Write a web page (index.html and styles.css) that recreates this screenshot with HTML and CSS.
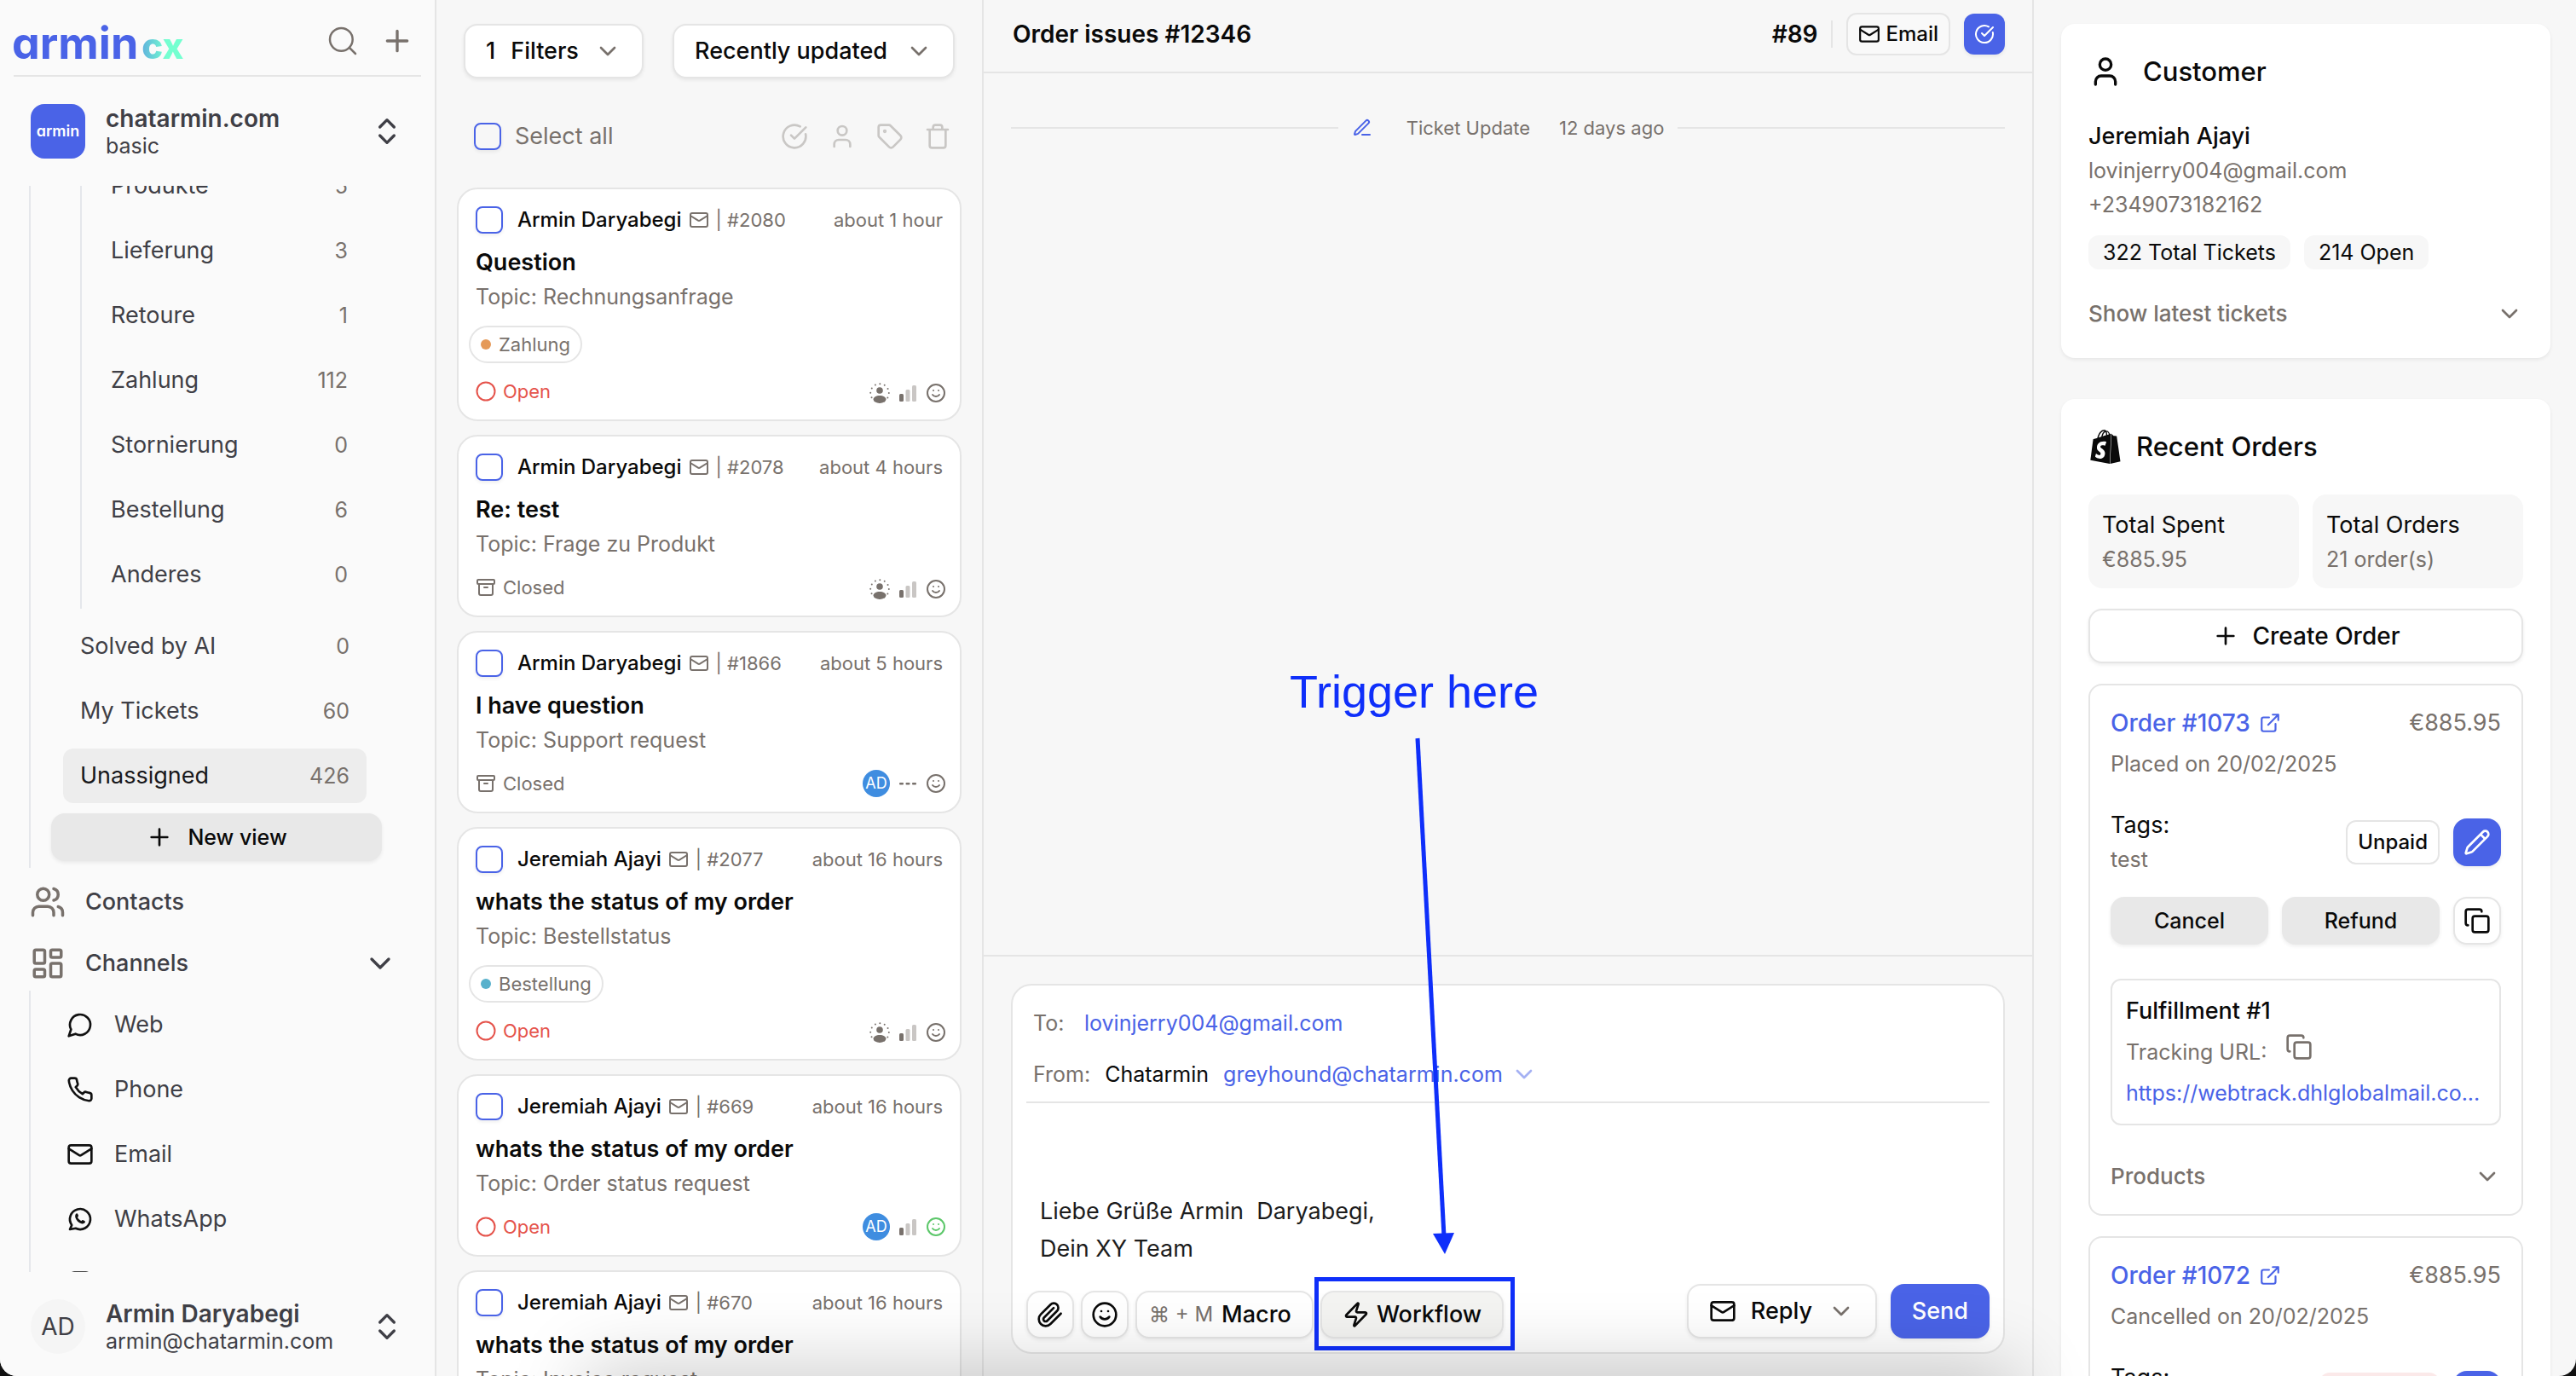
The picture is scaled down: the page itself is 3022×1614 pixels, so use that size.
FILE: index.html
```html
<!DOCTYPE html>
<html lang="en">
<head>
<meta charset="utf-8">
<title>armin cx – Tickets</title>
<link rel="stylesheet" href="styles.css">
</head>
<body>
<svg class="sprite" aria-hidden="true">
  <symbol id="search" viewBox="0 0 24 24"><circle cx="11" cy="11" r="8"/><path d="m21 21-4.3-4.3"/></symbol>
  <symbol id="plus" viewBox="0 0 24 24"><path d="M5 12h14M12 5v14"/></symbol>
  <symbol id="updown" viewBox="0 0 24 24"><path d="m7 15 5 5 5-5M7 9l5-5 5 5"/></symbol>
  <symbol id="chevron" viewBox="0 0 24 24"><path d="m6 9 6 6 6-6"/></symbol>
  <symbol id="users" viewBox="0 0 24 24"><path d="M16 21v-2a4 4 0 0 0-4-4H6a4 4 0 0 0-4 4v2"/><circle cx="9" cy="7" r="4"/><path d="M22 21v-2a4 4 0 0 0-3-3.87M16 3.13a4 4 0 0 1 0 7.75"/></symbol>
  <symbol id="board" viewBox="0 0 24 24"><rect x="3" y="3" width="7" height="9" rx="1"/><rect x="14" y="3" width="7" height="5" rx="1"/><rect x="14" y="12" width="7" height="9" rx="1"/><rect x="3" y="16" width="7" height="5" rx="1"/></symbol>
  <symbol id="chat" viewBox="0 0 24 24"><path d="M7.9 20A9 9 0 1 0 4 16.1L2 22Z"/></symbol>
  <symbol id="phone" viewBox="0 0 24 24"><path d="M22 16.92v3a2 2 0 0 1-2.18 2 19.79 19.79 0 0 1-8.63-3.07 19.5 19.5 0 0 1-6-6 19.79 19.79 0 0 1-3.07-8.67A2 2 0 0 1 4.11 2h3a2 2 0 0 1 2 1.72 12.84 12.84 0 0 0 .7 2.81 2 2 0 0 1-.45 2.11L8.09 9.91a16 16 0 0 0 6 6l1.27-1.27a2 2 0 0 1 2.11-.45 12.84 12.84 0 0 0 2.81.7A2 2 0 0 1 22 16.92z"/></symbol>
  <symbol id="mail" viewBox="0 0 24 24"><rect x="2" y="4" width="20" height="16" rx="2"/><path d="m22 7-8.97 5.7a1.94 1.94 0 0 1-2.06 0L2 7"/></symbol>
  <symbol id="whatsapp" viewBox="0 0 24 24"><path d="m3 21 1.65-3.8a9 9 0 1 1 3.4 2.9z"/><path d="M8.3 7.4c.5-.6 1.4-.5 1.7.2l.5 1.3c.2.5-.4 1-.7 1.4.6 1.500 1.700 2.600 3.300 3.300.4-.4.9-1 1.500-.7l1.300.6c.7.400.7 1.100.200 1.700-.7.900-1.900 1-2.900.7-2.600-.8-4.600-2.800-5.400-5.300-.3-1.100-.2-2.300.5-3.200z" fill="currentColor" stroke="none"/></symbol>
  <symbol id="instagram" viewBox="0 0 24 24"><rect x="2" y="2" width="20" height="20" rx="5"/><circle cx="12" cy="12" r="4"/></symbol>
  <symbol id="check" viewBox="0 0 24 24"><path d="M21.801 10A10 10 0 1 1 17 3.335"/><path d="m9 11 3 3L22 4"/></symbol>
  <symbol id="user" viewBox="0 0 24 24"><path d="M19 21v-2a4 4 0 0 0-4-4H9a4 4 0 0 0-4 4v2"/><circle cx="12" cy="7" r="4"/></symbol>
  <symbol id="tag" viewBox="0 0 24 24"><path d="M12.586 2.586A2 2 0 0 0 11.172 2H4a2 2 0 0 0-2 2v7.172a2 2 0 0 0 .586 1.414l8.704 8.704a2.426 2.426 0 0 0 3.420 0l6.580-6.580a2.426 2.426 0 0 0 0-3.420z"/><circle cx="7.500" cy="7.500" r=".6" fill="currentColor"/></symbol>
  <symbol id="trash" viewBox="0 0 24 24"><path d="M3 6h18M19 6v14a2 2 0 0 1-2 2H7a2 2 0 0 1-2-2V6M8 6V4a2 2 0 0 1 2-2h4a2 2 0 0 1 2 2v2"/></symbol>
  <symbol id="ring" viewBox="0 0 24 24"><circle cx="12" cy="12" r="10.500"/></symbol>
  <symbol id="archive" viewBox="0 0 24 24"><rect x="2" y="3" width="20" height="5" rx="1"/><path d="M4 8v11a2 2 0 0 0 2 2h12a2 2 0 0 0 2-2V8M10 12h4"/></symbol>
  <symbol id="nobody" viewBox="0 0 24 24"><circle cx="12" cy="12" r="10.800" stroke-width="2" stroke-dasharray="0 5.655"/><circle cx="12" cy="9" r="3.800" fill="currentColor" stroke="none"/><path d="M12 15c4 0 7.500 2 7.500 4.300S16 24 12 24s-7.500-2.400-7.500-4.700S8 15 12 15z" fill="currentColor" stroke="none"/></symbol>
  <symbol id="bars" viewBox="0 0 24 24"><g fill="currentColor" stroke="none"><rect x="2" y="13" width="5" height="9" rx="1.500"/><rect x="9.500" y="8" width="5" height="14" rx="1.500" opacity=".4"/><rect x="17" y="3" width="5" height="19" rx="1.500" opacity=".4"/></g></symbol>
  <symbol id="dashes" viewBox="0 0 24 24"><g fill="currentColor" stroke="none"><rect x="2" y="11" width="5" height="2.500" rx="1"/><rect x="9.500" y="11" width="5" height="2.500" rx="1"/><rect x="17" y="11" width="5" height="2.500" rx="1"/></g></symbol>
  <symbol id="smile" viewBox="0 0 24 24"><circle cx="12" cy="12" r="10"/><path d="M8 14s1.500 2 4 2 4-2 4-2M9 9h.01M15 9h.01"/></symbol>
  <symbol id="penline" viewBox="0 0 24 24"><path d="M12 20h9M16.376 3.622a1 1 0 0 1 3.002 3.002L7.368 18.635a2 2 0 0 1-.855.506l-2.872.838a.5.5 0 0 1-.62-.62l.838-2.872a2 2 0 0 1 .506-.854z"/></symbol>
  <symbol id="pencil" viewBox="0 0 24 24"><path d="M21.174 6.812a1 1 0 0 0-3.986-3.987L3.842 16.174a2 2 0 0 0-.5.83l-1.321 4.352a.5.5 0 0 0 .623.622l4.353-1.320a2 2 0 0 0 .83-.497zM15 5l4 4"/></symbol>
  <symbol id="clip" viewBox="0 0 24 24"><path d="m21.440 11.050-9.190 9.190a6 6 0 0 1-8.490-8.490l8.570-8.570A4 4 0 1 1 18 8.840l-8.590 8.570a2 2 0 0 1-2.830-2.830l8.490-8.480"/></symbol>
  <symbol id="zap" viewBox="0 0 24 24"><path d="M4 14a1 1 0 0 1-.78-1.630l9.900-10.200a.5.5 0 0 1 .86.46l-1.920 6.020A1 1 0 0 0 13 10h7a1 1 0 0 1 .78 1.630l-9.900 10.200a.5.5 0 0 1-.86-.46l1.920-6.020A1 1 0 0 0 11 14z"/></symbol>
  <symbol id="external" viewBox="0 0 24 24"><path d="M15 3h6v6M10 14 21 3M18 13v6a2 2 0 0 1-2 2H5a2 2 0 0 1-2-2V8a2 2 0 0 1 2-2h6"/></symbol>
  <symbol id="copy" viewBox="0 0 24 24"><rect x="8" y="8" width="14" height="14" rx="2"/><path d="M4 16c-1.100 0-2-.9-2-2V4c0-1.100.9-2 2-2h10c1.100 0 2 .9 2 2"/></symbol>
  <symbol id="shopify" viewBox="0 0 24 24"><path fill="currentColor" stroke="none" d="M15.337 23.979l7.216-1.561s-2.604-17.613-2.625-17.730c-.018-.116-.114-.192-.211-.192s-1.929-.136-1.929-.136-1.275-1.274-1.439-1.411c-.045-.037-.075-.057-.121-.074l-.914 21.104h.023zM11.710 11.305s-.81-.424-1.774-.424c-1.447 0-1.504.906-1.504 1.141 0 1.232 3.240 1.715 3.240 4.629 0 2.295-1.440 3.760-3.406 3.760-2.354 0-3.540-1.465-3.540-1.465l.646-2.086s1.245 1.066 2.280 1.066c.675 0 .975-.545.975-.932 0-1.619-2.654-1.694-2.654-4.359-.034-2.237 1.571-4.416 4.827-4.416 1.257 0 1.875.361 1.875.361l-.945 2.715-.02.01zM11.170.83c.136 0 .271.038.405.135-.984.465-2.064 1.639-2.508 3.992-.656.213-1.293.405-1.889.578C7.697 3.750 8.951.84 11.170.84V.83zm1.235 2.949v.135c-.754.232-1.583.484-2.394.736.466-1.777 1.333-2.645 2.085-2.971.193.501.309 1.176.309 2.100zm.539-2.234c.694.074 1.141.867 1.429 1.755-.349.114-.735.231-1.158.366v-.252c0-.752-.096-1.371-.271-1.871v.002zm2.992 1.289c-.02 0-.06.021-.078.021s-.289.075-.714.21c-.423-1.233-1.176-2.370-2.508-2.370h-.115C12.135.209 11.669 0 11.265 0 8.159 0 6.675 3.877 6.210 5.846c-1.194.365-2.063.636-2.160.674-.675.213-.694.232-.772.87-.075.462-1.830 14.063-1.830 14.063L15.009 24l.927-21.166z"/></symbol>
</svg>

<div class="app">
  <aside class="sidebar">
    <header class="brand">
      <a class="logo" href="#">armin<span class="logo-cx">cx</span></a>
      <button class="bare" aria-label="Search"><svg class="i40 thin"><use href="#search"/></svg></button>
      <button class="bare" aria-label="Add"><svg class="i40"><use href="#plus"/></svg></button>
    </header>
    <button class="account">
      <span class="account-logo">armin</span>
      <span class="account-text"><strong>chatarmin.com</strong><span>basic</span></span>
      <svg class="i40"><use href="#updown"/></svg>
    </button>

    <nav class="nav">
      <div class="branch views">
        <div class="branch topics">
          <a class="row" href="#">Produkte<span class="count">5</span></a>
          <a class="row" href="#">Lieferung<span class="count">3</span></a>
          <a class="row" href="#">Retoure<span class="count">1</span></a>
          <a class="row" href="#">Zahlung<span class="count">112</span></a>
          <a class="row" href="#">Stornierung<span class="count">0</span></a>
          <a class="row" href="#">Bestellung<span class="count">6</span></a>
          <a class="row" href="#">Anderes<span class="count">0</span></a>
        </div>
        <a class="row" href="#">Solved by AI<span class="count">0</span></a>
        <a class="row" href="#">My Tickets<span class="count">60</span></a>
        <a class="row active" href="#">Unassigned<span class="count">426</span></a>
        <button class="btn soft new-view"><svg class="i32"><use href="#plus"/></svg>New view</button>
      </div>
      <a class="section" href="#"><svg class="i42"><use href="#users"/></svg>Contacts</a>
      <a class="section" href="#"><svg class="i42"><use href="#board"/></svg>Channels<svg class="i40 fold"><use href="#chevron"/></svg></a>
      <div class="branch channels">
        <a class="row" href="#"><svg class="i32"><use href="#chat"/></svg>Web</a>
        <a class="row" href="#"><svg class="i32"><use href="#phone"/></svg>Phone</a>
        <a class="row" href="#"><svg class="i32"><use href="#mail"/></svg>Email</a>
        <a class="row" href="#"><svg class="i32"><use href="#whatsapp"/></svg>WhatsApp</a>
        <a class="row" href="#" aria-label="Instagram"><svg class="i32"><use href="#instagram"/></svg></a>
      </div>
    </nav>

    <button class="account me">
      <span class="avatar">AD</span>
      <span class="account-text"><strong>Armin Daryabegi</strong><span>armin@chatarmin.com</span></span>
      <svg class="i40"><use href="#updown"/></svg>
    </button>
  </aside>

  <section class="list">
    <div class="filters">
      <button class="btn filter"><span>1</span><span>Filters</span><svg class="i32 dim"><use href="#chevron"/></svg></button>
      <div class="btn sort">
        <select aria-label="Sort order"><option>Recently updated</option></select>
        <svg class="i32 dim"><use href="#chevron"/></svg>
      </div>
    </div>
    <div class="bulk">
      <label class="select-all"><input class="tick" type="checkbox">Select all</label>
      <button class="bare" aria-label="Close"><svg class="i32"><use href="#check"/></svg></button>
      <button class="bare" aria-label="Assign"><svg class="i32"><use href="#user"/></svg></button>
      <button class="bare" aria-label="Tag"><svg class="i32"><use href="#tag"/></svg></button>
      <button class="bare" aria-label="Delete"><svg class="i32"><use href="#trash"/></svg></button>
    </div>

    <article class="ticket">
      <div class="ticket-head"><input class="tick" type="checkbox" aria-label="Select #2080"><b>Armin Daryabegi</b><svg class="i24"><use href="#mail"/></svg><span>| #2080</span><time>about 1 hour</time></div>
      <h3>Question</h3>
      <p>Topic: Rechnungsanfrage</p>
      <span class="pill orange">Zahlung</span>
      <div class="ticket-foot"><span class="state open"><svg class="i24"><use href="#ring"/></svg>Open</span><svg class="i24"><use href="#nobody"/></svg><svg class="i24"><use href="#bars"/></svg><svg class="i24"><use href="#smile"/></svg></div>
    </article>
    <article class="ticket">
      <div class="ticket-head"><input class="tick" type="checkbox" aria-label="Select #2078"><b>Armin Daryabegi</b><svg class="i24"><use href="#mail"/></svg><span>| #2078</span><time>about 4 hours</time></div>
      <h3>Re: test</h3>
      <p>Topic: Frage zu Produkt</p>
      <div class="ticket-foot"><span class="state"><svg class="i24"><use href="#archive"/></svg>Closed</span><svg class="i24"><use href="#nobody"/></svg><svg class="i24"><use href="#bars"/></svg><svg class="i24"><use href="#smile"/></svg></div>
    </article>
    <article class="ticket">
      <div class="ticket-head"><input class="tick" type="checkbox" aria-label="Select #1866"><b>Armin Daryabegi</b><svg class="i24"><use href="#mail"/></svg><span>| #1866</span><time>about 5 hours</time></div>
      <h3>I have question</h3>
      <p>Topic: Support request</p>
      <div class="ticket-foot"><span class="state"><svg class="i24"><use href="#archive"/></svg>Closed</span><span class="assignee">AD</span><svg class="i24"><use href="#dashes"/></svg><svg class="i24"><use href="#smile"/></svg></div>
    </article>
    <article class="ticket">
      <div class="ticket-head"><input class="tick" type="checkbox" aria-label="Select #2077"><b>Jeremiah Ajayi</b><svg class="i24"><use href="#mail"/></svg><span>| #2077</span><time>about 16 hours</time></div>
      <h3>whats the status of my order</h3>
      <p>Topic: Bestellstatus</p>
      <span class="pill teal">Bestellung</span>
      <div class="ticket-foot"><span class="state open"><svg class="i24"><use href="#ring"/></svg>Open</span><svg class="i24"><use href="#nobody"/></svg><svg class="i24"><use href="#bars"/></svg><svg class="i24"><use href="#smile"/></svg></div>
    </article>
    <article class="ticket">
      <div class="ticket-head"><input class="tick" type="checkbox" aria-label="Select #669"><b>Jeremiah Ajayi</b><svg class="i24"><use href="#mail"/></svg><span>| #669</span><time>about 16 hours</time></div>
      <h3>whats the status of my order</h3>
      <p>Topic: Order status request</p>
      <div class="ticket-foot"><span class="state open"><svg class="i24"><use href="#ring"/></svg>Open</span><span class="assignee">AD</span><svg class="i24"><use href="#bars"/></svg><svg class="i24 happy"><use href="#smile"/></svg></div>
    </article>
    <article class="ticket">
      <div class="ticket-head"><input class="tick" type="checkbox" aria-label="Select #670"><b>Jeremiah Ajayi</b><svg class="i24"><use href="#mail"/></svg><span>| #670</span><time>about 16 hours</time></div>
      <h3>whats the status of my order</h3>
      <p>Topic: Invoice request</p>
      <div class="ticket-foot"></div>
    </article>
  </section>

  <main class="thread">
    <header class="thread-head">
      <input class="title" type="text" value="Order issues #12346" aria-label="Ticket title">
      <strong>#89</strong>
      <span class="divider"></span>
      <button class="btn channel"><svg class="i26"><use href="#mail"/></svg>Email</button>
      <button class="btn primary square48" aria-label="Close ticket"><svg class="i24"><use href="#check"/></svg></button>
    </header>
    <div class="messages">
      <div class="event">
        <svg class="i24"><use href="#penline"/></svg><span>Ticket Update</span><time>12 days ago</time>
      </div>
    </div>
    <section class="compose">
      <form class="composer">
        <div class="address"><span class="label">To:</span><a href="#">lovinjerry004@gmail.com</a></div>
        <div class="address"><span class="label">From:</span><span>Chatarmin</span><a href="#">greyhound@chatarmin.com</a><svg class="i32"><use href="#chevron"/></svg></div>
        <hr>
        <textarea rows="2" aria-label="Message">Liebe Grüße Armin  Daryabegi,
Dein XY Team</textarea>
        <div class="tools">
          <button type="button" class="btn tool square56" aria-label="Attach"><svg class="i32"><use href="#clip"/></svg></button>
          <button type="button" class="btn tool square56" aria-label="Emoji"><svg class="i32"><use href="#smile"/></svg></button>
          <button type="button" class="btn tool macro"><kbd>⌘ + M</kbd>Macro</button>
          <div class="target">
            <button type="button" class="btn tool workflow"><svg class="i32"><use href="#zap"/></svg>Workflow</button>
            <span class="highlight"></span>
          </div>
          <div class="send">
            <div class="btn reply"><svg class="i32"><use href="#mail"/></svg>
              <select aria-label="Reply type"><option>Reply</option></select>
              <svg class="i32 dim"><use href="#chevron"/></svg></div>
            <button type="submit" class="btn primary">Send</button>
          </div>
        </div>
      </form>
    </section>
    <div class="hint">Trigger here</div>
    <svg class="arrow" viewBox="0 0 60 615"><path d="M13 6 44 590" stroke="#0f2ffa" stroke-width="5"/><path d="M31 587 56 586 45 611z" fill="#0f2ffa"/></svg>
  </main>

  <aside class="details">
    <section class="panel">
      <h2><svg class="i40"><use href="#user"/></svg>Customer</h2>
      <div class="person">
        <strong>Jeremiah Ajayi</strong>
        <span>lovinjerry004@gmail.com</span>
        <span>+2349073182162</span>
      </div>
      <div class="chips"><span>322 Total Tickets</span><span>214 Open</span></div>
      <button class="expander latest">Show latest tickets<svg class="i32"><use href="#chevron"/></svg></button>
    </section>

    <section class="panel">
      <h2 class="shop"><svg class="i40"><use href="#shopify"/></svg>Recent Orders</h2>
      <div class="stats">
        <div><strong>Total Spent</strong><span>€885.95</span></div>
        <div><strong>Total Orders</strong><span>21 order(s)</span></div>
      </div>
      <button class="btn create"><svg class="i32"><use href="#plus"/></svg>Create Order</button>

      <article class="order">
        <div class="order-top"><a href="#">Order #1073<svg class="i26"><use href="#external"/></svg></a><span>€885.95</span></div>
        <p>Placed on 20/02/2025</p>
        <div class="order-tags">
          <div class="tags"><strong>Tags:</strong><span>test</span></div>
          <span class="status">Unpaid</span>
          <button class="btn primary square56" aria-label="Edit"><svg class="i32"><use href="#pencil"/></svg></button>
        </div>
        <div class="order-actions">
          <button class="btn soft">Cancel</button>
          <button class="btn soft">Refund</button>
          <button class="btn square56" aria-label="Duplicate"><svg class="i32"><use href="#copy"/></svg></button>
        </div>
        <div class="fulfillment">
          <strong>Fulfillment #1</strong>
          <div class="tracking">Tracking URL:<button class="bare" aria-label="Copy URL"><svg class="i32"><use href="#copy"/></svg></button></div>
          <a href="#">https://webtrack.dhlglobalmail.co...</a>
        </div>
        <button class="expander products">Products<svg class="i32"><use href="#chevron"/></svg></button>
      </article>

      <article class="order">
        <div class="order-top"><a href="#">Order #1072<svg class="i26"><use href="#external"/></svg></a><span>€885.95</span></div>
        <p>Cancelled on 20/02/2025</p>
        <div class="order-tags">
          <div class="tags"><strong>Tags:</strong></div>
          <span class="status refunded"></span>
          <button class="btn primary square56" aria-label="Edit"><svg class="i32"><use href="#pencil"/></svg></button>
        </div>
      </article>
    </section>
  </aside>
  <div class="shade"></div>
</div>
</body>
</html>
```
FILE: styles.css
```css
:root {
  --ink: #0a0a0a;
  --muted: #78716c;
  --nav: #3f3f46;
  --line: #e5e5e5;
  --blue: #4a63e7;
  --mark: #0f2ffa;
  --shadow: 0 2px 4px rgba(0, 0, 0, .07);
}

* { box-sizing: border-box; }

body {
  margin: 0;
  background: #111;
  color: var(--ink);
  font: 25px/40px Inter, "Liberation Sans", sans-serif;
}

h2, h3, p { margin: 0; font-weight: 400; }
a { color: inherit; text-decoration: none; }
button, input, select, textarea { font: inherit; color: inherit; border: 0; padding: 0; margin: 0; background: none; }
select { appearance: none; }
strong, b { font-weight: 500; }

svg { flex: none; fill: none; stroke: currentColor; stroke-width: 2; stroke-linecap: round; stroke-linejoin: round; }
.sprite { display: none; }
.i24 { width: 24px; height: 24px; }
.i26 { width: 26px; height: 26px; }
.i32 { width: 32px; height: 32px; }
.i40 { width: 40px; height: 40px; }
.i42 { width: 42px; height: 42px; }
.thin { stroke-width: 1.5; }
.dim { color: var(--muted); }

.app {
  position: relative;
  display: grid;
  grid-template-columns: 512px 642px minmax(0, 1fr) 638px;
  height: 100vh;
  overflow: hidden;
  background: #f7f7f7;
  border-radius: 0 0 20px 20px;
}

.bare { display: flex; }

.btn {
  display: flex;
  align-items: center;
  justify-content: center;
  border: 2px solid var(--line);
  border-radius: 16px;
  background: #fff;
  box-shadow: var(--shadow);
  font-size: 27px;
  font-weight: 500;
}
.btn.soft { border: 0; background: #e8e8e8; font-size: 25px; height: 56px; }
.btn.primary { border: 0; background: var(--blue); color: #fff; }
.btn.square48 { width: 48px; height: 48px; border-radius: 12px; }
.btn.square56 { width: 56px; height: 56px; }

/* Sidebar */
.sidebar {
  display: flex;
  flex-direction: column;
  min-height: 0;
  background: #fafafa;
  border-right: 2px solid var(--line);
  color: var(--nav);
  font-size: 27px;
}
.brand {
  display: flex;
  align-items: center;
  gap: 24px;
  height: 90px;
  margin: 0 16px;
  padding: 8px 8px 0 0;
  border-bottom: 2px solid var(--line);
  color: var(--muted);
}
.logo {
  display: flex;
  align-items: baseline;
  gap: 4px;
  margin-right: auto;
  margin-left: -2px;
  padding-top: 8px;
  color: var(--blue);
  font-size: 52px;
  font-weight: 700;
  font-feature-settings: "cv11";
}
.logo-cx {
  background: linear-gradient(90deg, #5fb0dd, #74ffd0 60%);
  background-clip: text;
  color: transparent;
  font-size: 42px;
  font-weight: 800;
}
.account {
  display: flex;
  flex: none;
  align-items: center;
  height: 128px;
  padding: 0 36px;
  gap: 24px;
  text-align: left;
}
.account-logo, .avatar {
  display: flex;
  align-items: center;
  justify-content: center;
  width: 64px;
  height: 64px;
}
.account-logo {
  border-radius: 16px;
  background: var(--blue);
  color: #fff;
  font-size: 18px;
  font-weight: 600;
  font-feature-settings: "cv11";
}
.avatar { border-radius: 50%; background: #f5f5f5; font-size: 28px; }
.account-text { display: flex; flex: 1; flex-direction: column; line-height: 34px; }
.account-text strong { font-size: 28px; font-weight: 600; }
.account-text span { font-size: 25px; line-height: 30px; }
.account.me { height: 122px; padding-top: 6px; }

.nav { flex: 1; min-height: 0; overflow: hidden; }
.branch { display: flex; flex-direction: column; gap: 12px; border-left: 2px solid #e5e7eb; }
.views { margin: -32px 80px 0 34px; padding: 0 0 8px 38px; }
.topics { margin-left: 20px; padding: 0 0 8px 14px; margin-right: 2px; }
.row {
  display: flex;
  align-items: center;
  height: 64px;
  padding: 0 20px;
  border-radius: 12px;
}
.row .count { margin-left: auto; color: var(--muted); font-size: 25px; }
.row.active { background: #ededed; color: #18181b; }
.new-view { gap: 17px; margin: 0 -18px 0 -14px; color: var(--ink); }
.section { display: flex; align-items: center; gap: 23px; height: 64px; margin: 8px 44px 0 35px; font-weight: 500; }
.section svg { color: var(--muted); }
.section .fold { margin-left: auto; color: var(--nav); }
.channels { margin-left: 34px; padding: 8px 0 0 22px; }
.channels .row { gap: 24px; }
.channels svg { color: #111; }

/* Ticket list */
.list {
  display: flex;
  flex-direction: column;
  gap: 16px;
  min-height: 0;
  padding: 28px 24px 0;
  border-right: 2px solid var(--line);
}
.list > * { flex: none; }
.filters { display: flex; justify-content: space-between; padding: 0 8px; }
.filters .btn { height: 64px; }
.filter { gap: 18px; padding: 0 24px; }
.sort { gap: 20px; padding: 0 24px; }
.bulk { display: flex; align-items: center; gap: 24px; height: 96px; padding: 8px 12px 0 20px; color: #c9c7c5; }
.select-all { display: flex; align-items: center; gap: 16px; margin-right: auto; color: var(--muted); font-size: 27px; }
.tick {
  appearance: none;
  width: 32px;
  height: 32px;
  border: 2px solid var(--blue);
  border-radius: 8px;
  background: #fff;
  box-shadow: var(--shadow);
}
.bulk .tick { background: none; }

.ticket {
  display: flex;
  flex-direction: column;
  padding: 20px 16px 16px 20px;
  border: 2px solid var(--line);
  border-radius: 24px;
  background: #fff;
  color: var(--muted);
  font-size: 22px;
}
.ticket-head { display: flex; align-items: center; gap: 8px; height: 32px; margin-bottom: 14px; }
.ticket-head b { margin-left: 9px; color: var(--ink); font-size: 24px; }
.ticket-head time { margin-left: auto; padding-right: 4px; }
.ticket h3 { color: var(--ink); font-size: 27px; font-weight: 600; line-height: 40px; }
.ticket p { font-size: 25px; line-height: 40px; margin-bottom: 14px; }
.pill {
  display: flex;
  align-items: center;
  align-self: flex-start;
  gap: 9px;
  height: 44px;
  margin: 0 0 16px -8px;
  padding: 0 12px;
  border: 2px solid var(--line);
  border-radius: 22px;
}
.pill::before { content: ""; width: 12px; height: 12px; border-radius: 50%; background: #e59a59; }
.pill.teal::before { background: #58b1cc; }
.ticket-foot { display: flex; align-items: center; gap: 9px; height: 34px; }
.ticket-foot:not(:has(.assignee)) > svg { margin-top: 4px; }
.state { display: flex; align-items: center; gap: 8px; margin-right: auto; }
.state.open { color: #e5534b; }
.happy { color: #5cc76a; }
.assignee {
  width: 32px;
  height: 32px;
  border-radius: 50%;
  background: #3f8de0;
  color: #fff;
  font-size: 18px;
  line-height: 32px;
  text-align: center;
}

/* Conversation */
.thread { position: relative; display: flex; flex-direction: column; min-height: 0; }
.thread-head {
  display: flex;
  align-items: center;
  gap: 16px;
  height: 86px;
  padding: 0 32px 4px;
  border-bottom: 2px solid var(--line);
}
.thread-head strong, .title { font-size: 28px; font-weight: 600; }
.title { flex: 1; min-width: 0; padding-left: 2px; }
.divider { width: 2px; height: 32px; background: var(--line); }
.channel { gap: 6px; height: 50px; padding: 0 12px; border-radius: 12px; background: #f9f9f9; font-size: 24px; box-shadow: none; }
.messages { flex: 1; padding: 44px 32px; }
.event { display: flex; align-items: center; color: var(--muted); font-size: 22px; }
.event::before, .event::after { content: ""; flex: 1; height: 2px; background: var(--line); }
.event svg { margin: 0 40px 0 16px; color: var(--blue); }
.event time { margin: 0 16px 0 34px; }

.compose { padding: 32px 32px 26px; border-top: 2px solid var(--line); }
.composer { padding: 16px; border: 2px solid var(--line); border-radius: 24px; background: #fff; }
.address { display: flex; align-items: center; gap: 17px; height: 56px; margin-bottom: 4px; padding: 0 8px; }
.address .label { min-width: 43px; color: var(--muted); }
.address a { color: var(--blue); }
.address svg { margin-left: -8px; color: #a5b1f3; }
.composer hr { height: 2px; margin: 0; border: 0; background: var(--line); }
.composer textarea {
  display: block;
  width: 100%;
  height: 88px;
  margin: 105px 0 19px;
  padding: 0 16px;
  resize: none;
  overflow: hidden;
  color: #1c1c1c;
  font-size: 27px;
  line-height: 44px;
}
.tools { display: flex; align-items: flex-end; gap: 8px; }
.tool { height: 56px; }
.macro { gap: 10px; padding: 0 24px 0 14px; }
.macro kbd { color: var(--muted); font: inherit; font-weight: 400; font-size: 24px; }
.target { position: relative; }
.workflow { gap: 8px; padding: 0 24px; background: #f4f4f2; }
.highlight { position: absolute; inset: -16px -13px -14px -7px; border: 5px solid var(--mark); pointer-events: none; }
.send { display: flex; gap: 16px; margin-left: auto; }
.send .btn { height: 64px; }
.send .primary { padding: 0 25px; }
.reply { gap: 17px; padding: 0 24px; }

.hint { position: absolute; top: 781px; left: 359px; color: var(--mark); font: 54px/60px "Liberation Sans", Arial, sans-serif; }
.arrow { position: absolute; top: 860px; left: 496px; width: 60px; height: 615px; stroke: none; stroke-linecap: butt; }

/* Customer and order details */
.details {
  display: flex;
  flex-direction: column;
  gap: 48px;
  min-height: 0;
  padding: 28px 30px 0 32px;
  border-left: 2px solid var(--line);
}
.panel { flex: none; padding: 36px 32px 28px; border-radius: 16px; background: #fff; box-shadow: var(--shadow); }
.panel h2 { display: flex; align-items: center; gap: 24px; height: 40px; margin-bottom: 36px; font-size: 31px; font-weight: 500; }
.panel h2.shop { gap: 16px; }
.person { display: flex; flex-direction: column; color: var(--muted); }
.person strong { color: var(--ink); font-size: 27px; }
.chips { display: flex; gap: 16px; margin-top: 16px; }
.chips span { padding: 0 17px; border-radius: 12px; background: #f7f7f7; }
.expander { display: flex; align-items: center; justify-content: space-between; width: 100%; height: 48px; color: var(--muted); font-size: 26px; font-weight: 500; }
.latest { margin-top: 28px; }
.stats { display: grid; grid-template-columns: 1fr 1fr; gap: 16px; }
.stats div { display: flex; flex-direction: column; padding: 16px 16px 14px; border-radius: 16px; background: #f7f7f7; color: var(--muted); }
.stats strong { color: var(--ink); font-size: 27px; font-weight: 400; }
.create { width: 100%; height: 64px; margin: 24px 0; gap: 16px; font-size: 28px; }

.order { margin-bottom: 24px; padding: 24px 24px 20px; border: 2px solid var(--line); border-radius: 16px; color: var(--muted); }
.order-top { display: flex; justify-content: space-between; font-size: 27px; }
.order-top a { display: flex; align-items: center; gap: 10px; color: var(--blue); font-size: 28px; font-weight: 500; }
.order p { margin-top: 8px; }
.order-tags { display: flex; align-items: center; gap: 16px; min-height: 80px; margin-top: 32px; }
.tags { display: flex; flex: 1; flex-direction: column; align-self: flex-start; }
.tags strong { color: var(--ink); font-size: 27px; font-weight: 400; }
.status {
  padding: 4px 12px;
  border: 2px solid var(--line);
  border-radius: 12px;
  color: var(--ink);
  font-size: 24px;
  font-weight: 500;
}
.status.refunded { width: 141px; height: 52px; border-color: #fbe9e9; background: #fbe9e9; }
.order-actions { display: grid; grid-template-columns: 1fr 1fr 56px; gap: 16px; margin: 24px 0 40px; color: var(--ink); }
.fulfillment { padding: 16px; border: 2px solid var(--line); border-radius: 12px; }
.fulfillment strong { display: block; color: var(--ink); font-size: 27px; }
.tracking { display: flex; align-items: center; gap: 22px; height: 56px; }
.tracking .bare { margin-bottom: 12px; }
.fulfillment a { display: block; overflow: hidden; color: var(--blue); white-space: nowrap; }
.products { margin-top: 36px; }

/* Soft shade rising from the bottom edge */
.shade {
  position: absolute;
  top: 100%;
  left: 23%;
  right: 22%;
  height: 80px;
  box-shadow: 0 0 90px 10px rgba(0, 0, 0, .2);
  pointer-events: none;
}
```
